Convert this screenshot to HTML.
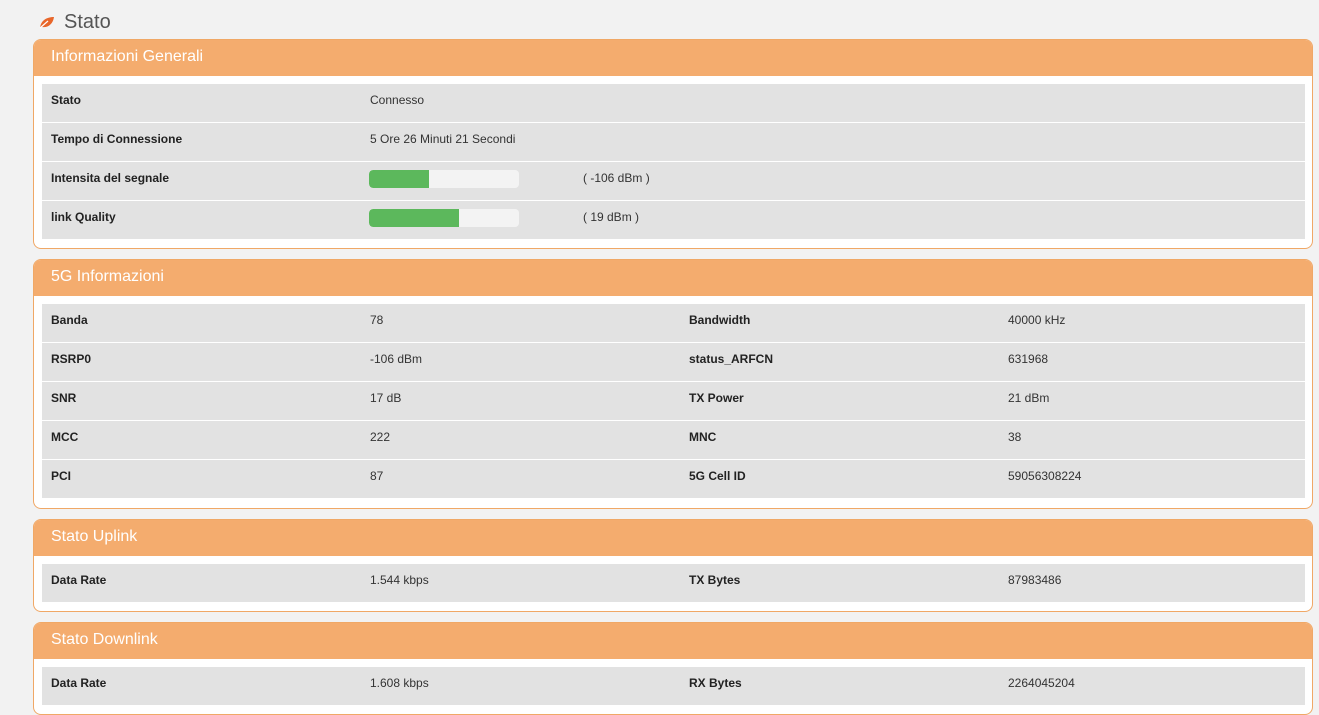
<!DOCTYPE html>
<html><head><meta charset="utf-8"><style>
body{margin:0;background:#f2f2f2;font-family:"Liberation Sans",Arial,sans-serif;width:1319px;height:715px;overflow:hidden;position:relative}
.title{position:absolute;left:38px;top:11px;font-size:20px;color:#555;display:flex;align-items:center}
.title svg{margin-right:9px}
.panel{position:absolute;left:33px;width:1278px;border:1px solid #f0a866;border-radius:8px;background:#fff;overflow:hidden}
.hd{background:#f4ac6e;height:36px;line-height:34px;color:#fff;font-size:16px;padding-left:17px}
.rows{padding:8px 7px 0 8px}
.row{height:38px;background:#e2e2e2;margin-bottom:1px;position:relative;font-size:12px;color:#333}
.row span{position:absolute;top:9px}
.l{font-weight:bold;color:#222}
.bar{position:absolute;left:327px;top:8px;width:150px;height:18px;background:#f3f3f3;border-radius:4px;overflow:hidden}
.bar i{display:block;height:100%;background:#5cb85c;border-radius:4px 0 0 4px}
</style></head><body>
<div class="title"><svg width="17" height="13" viewBox="0 0 17 13"><path d="M2 12 C3 4 9 1 16 1 C15 8 10 12 4 11 Z" fill="#e8662a"/><path d="M2 12 L10 5" stroke="#fff" stroke-width="1.2"/></svg>Stato</div>

<div class="panel" style="top:39px;height:208px"><div class="hd">Informazioni Generali</div><div class="rows">
<div class="row"><span class="l" style="left:9px">Stato</span><span style="left:328px">Connesso</span></div>
<div class="row"><span class="l" style="left:9px">Tempo di Connessione</span><span style="left:328px">5 Ore 26 Minuti 21 Secondi</span></div>
<div class="row"><span class="l" style="left:9px">Intensita del segnale</span><div class="bar"><i style="width:60px"></i></div><span style="left:541px">( -106 dBm )</span></div>
<div class="row"><span class="l" style="left:9px">link Quality</span><div class="bar"><i style="width:90px"></i></div><span style="left:541px">( 19 dBm )</span></div>
</div></div>

<div class="panel" style="top:259px;height:248px"><div class="hd">5G Informazioni</div><div class="rows">
<div class="row"><span class="l" style="left:9px">Banda</span><span style="left:328px">78</span><span class="l" style="left:647px">Bandwidth</span><span style="left:966px">40000 kHz</span></div>
<div class="row"><span class="l" style="left:9px">RSRP0</span><span style="left:328px">-106 dBm</span><span class="l" style="left:647px">status_ARFCN</span><span style="left:966px">631968</span></div>
<div class="row"><span class="l" style="left:9px">SNR</span><span style="left:328px">17 dB</span><span class="l" style="left:647px">TX Power</span><span style="left:966px">21 dBm</span></div>
<div class="row"><span class="l" style="left:9px">MCC</span><span style="left:328px">222</span><span class="l" style="left:647px">MNC</span><span style="left:966px">38</span></div>
<div class="row"><span class="l" style="left:9px">PCI</span><span style="left:328px">87</span><span class="l" style="left:647px">5G Cell ID</span><span style="left:966px">59056308224</span></div>
</div></div>

<div class="panel" style="top:519px;height:91px"><div class="hd">Stato Uplink</div><div class="rows">
<div class="row"><span class="l" style="left:9px">Data Rate</span><span style="left:328px">1.544 kbps</span><span class="l" style="left:647px">TX Bytes</span><span style="left:966px">87983486</span></div>
</div></div>

<div class="panel" style="top:622px;height:91px"><div class="hd">Stato Downlink</div><div class="rows">
<div class="row"><span class="l" style="left:9px">Data Rate</span><span style="left:328px">1.608 kbps</span><span class="l" style="left:647px">RX Bytes</span><span style="left:966px">2264045204</span></div>
</div></div>
</body></html>
